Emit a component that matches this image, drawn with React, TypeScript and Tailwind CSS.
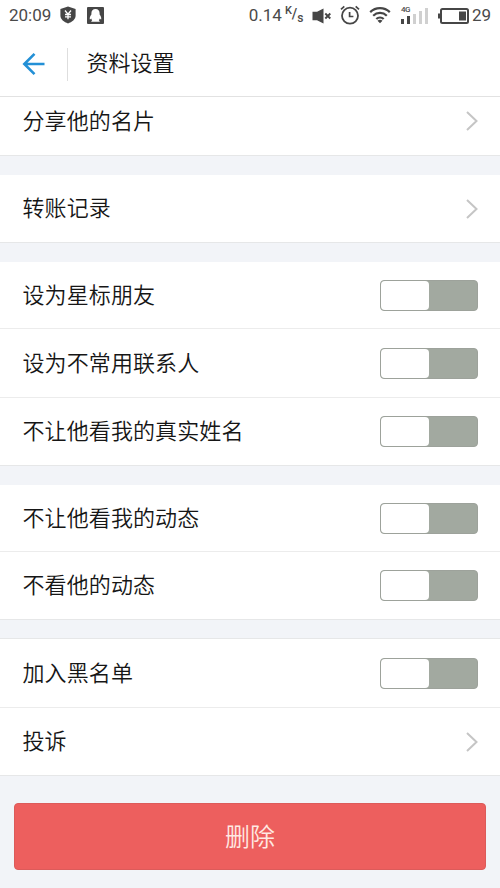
import { useState } from "react";
import clsx from "clsx";

interface SettingItem {
  label: string;
  type: "link" | "switch";
  className: string;
}

const groups: SettingItem[][] = [
  [{ label: "分享他的名片", type: "link", className: "h-[59px] pb-[10px]" }],
  [{ label: "转账记录", type: "link", className: "h-[68px]" }],
  [
    { label: "设为星标朋友", type: "switch", className: "h-[67px]" },
    { label: "设为不常用联系人", type: "switch", className: "h-[69px]" },
    { label: "不让他看我的真实姓名", type: "switch", className: "h-[68px]" },
  ],
  [
    { label: "不让他看我的动态", type: "switch", className: "h-[67px]" },
    { label: "不看他的动态", type: "switch", className: "h-[68px]" },
  ],
  [
    { label: "加入黑名单", type: "switch", className: "h-[69px]" },
    { label: "投诉", type: "link", className: "h-[68px]" },
  ],
];

function StatusBar() {
  return (
    <div className="flex h-8 items-center px-[9px] text-[#4a4a4a]">
      <span className="w-[51px] pb-px font-[Roboto] text-[17px] leading-[31px]">20:09</span>
      <svg width="16" height="18" viewBox="0 0 16 18" className="mb-[2px] shrink-0">
        <path d="M8 0.5 15.6 3v6.5c0 4-3.6 6.4-7.6 8-4-1.6-7.6-4-7.6-8V3z" fill="#464646" />
        <path d="m5 4.5 3 3.7 3-3.7M8 8v5.3M5 8.5h6M5 10.8h6" fill="none" stroke="#fff" strokeWidth="1.3" />
      </svg>
      <svg width="17" height="17" viewBox="0 0 17 17" className="mb-[2px] ml-[11px] shrink-0">
        <rect width="17" height="17" rx="1" fill="#464646" />
        <path
          d="M8.5 2c2.7 0 4.1 1.8 4.1 4.2v1.3c1 1.3 2 3.2 1.6 4.7-.3.5-1-.1-1.4-.6-.2.8-.6 1.4-1 1.8.8.4 1.1.7.8 1.3H4.4c-.3-.6 0-.9.8-1.3-.4-.4-.8-1-1-1.8-.4.5-1.1 1.1-1.4.6-.4-1.5.6-3.4 1.6-4.7V6.2C4.4 3.800 5.8 2 8.5 2z"
          fill="#fff"
        />
      </svg>

      <div className="ml-auto flex items-center">
        <span className="pb-px font-[Roboto] text-[17px] leading-[31px]">0.14</span>
        <span className="ml-[3px] mr-[9px] flex w-[18px] font-[Roboto] text-[11px] font-medium leading-4">
          <span className="-mt-1">K</span>
          <span className="-mt-px text-[14px]">/</span>
          <span className="mt-[3px] text-[12px]">s</span>
        </span>
        <svg width="20" height="16" viewBox="0 0 20 16" className="mb-px">
          <path d="M0.5 3.8h4.5L11.500 0.500v15L5 12.200H0.5z" fill="#464646" />
          <path d="m13.300 5.500 5 5m0-5-5 5" stroke="#464646" strokeWidth="1.9" />
        </svg>
        <svg width="20" height="20" viewBox="0 0 20 20" className="mb-[2px] ml-[8px]" fill="none" stroke="#464646">
          <circle cx="10" cy="10.7" r="8" strokeWidth="1.8" />
          <path d="M9.6 7v4.5h3.8" strokeWidth="1.7" />
          <path d="m1 4.300 3.300-3M19 4.300l-3.300-3" strokeWidth="1.7" />
        </svg>
        <svg width="22" height="18" viewBox="0 0 22 18" className="mb-[2px] ml-[9px]" fill="none" stroke="#464646" strokeWidth="2.2">
          <path d="M1.2 6.1c5.400-5.300 14.200-5.300 19.600 0M4.2 9.7c3.8-3.7 9.800-3.7 13.600 0M7.3 13c2.100-2 5.300-2 7.400 0" />
          <path d="m8.500 14.7 2.500 2.600 2.500-2.600c-1.400-1.300-3.600-1.300-5 0z" fill="#464646" stroke="none" />
        </svg>
        <div className="mb-[3px] ml-[10px] h-[18px] w-[27px]">
          <div className="h-2 font-[Roboto] text-[8px] font-medium leading-2 tracking-tighter">4G</div>
          <div className="-mt-2 flex h-[18px] items-end gap-[3px]">
            <i className="h-[5px] w-[3px] bg-[#464646]" />
            <i className="h-[8px] w-[3px] bg-[#464646]" />
            <i className="h-[10px] w-[3px] bg-[#d0d0d0]" />
            <i className="h-[13px] w-[3px] bg-[#d0d0d0]" />
            <i className="h-[16px] w-[3px] bg-[#d0d0d0]" />
          </div>
        </div>
        <svg width="32" height="16" viewBox="0 0 32 16" className="mb-px ml-[10px]">
          <rect x="3" y="1" width="27" height="14" rx="1.5" fill="none" stroke="#464646" strokeWidth="2" />
          <path d="M0 5.500h3v5H0zM21 3.500h7v9h-7z" fill="#464646" />
        </svg>
        <span className="ml-[2px] pb-px font-[Roboto] text-[17px] leading-[31px]">29</span>
      </div>
    </div>
  );
}

function Header() {
  return (
    <header className="flex h-[65px] items-center border-b border-[#e2e2e2] pl-[22px]">
      <button aria-label="返回">
        <svg width="24" height="24" viewBox="0 0 24 24" fill="none" stroke="#2390d6" strokeWidth="2.6">
          <path d="M12.500 1.800 2.300 12l10.200 10.200M2.500 12h20" />
        </svg>
      </button>
      <div className="ml-[21px] h-[33px] w-px bg-[#dedede]" />
      <h1 className="ml-[18.5px] pb-[7px] text-[22px] font-[350] leading-8">资料设置</h1>
    </header>
  );
}

function Toggle() {
  const [on, setOn] = useState(false);

  return (
    <button
      role="switch"
      aria-checked={on}
      onClick={() => setOn(!on)}
      className={clsx(
        "flex h-[31px] w-[98px] rounded-[4px] border border-[#9da29b]",
        on ? "justify-end bg-[#2390d6]" : "bg-[#a2a9a0]"
      )}
    >
      <span className="h-full w-[48px] rounded-[4px] bg-white" />
    </button>
  );
}

function Row({ item, last }: { item: SettingItem; last: boolean }) {
  return (
    <div
      className={clsx(
        "flex items-center justify-between border-b bg-white px-[22px]",
        last ? "border-[#e6e7e8]" : "border-[#ececec]",
        item.className
      )}
    >
      <span className="pb-[5px] pl-[0.5px] text-[22px] font-[350] leading-8 tracking-[0.1px]">{item.label}</span>
      {item.type === "switch" ? (
        <Toggle />
      ) : (
        <svg width="13" height="20" viewBox="0 0 13 20" fill="none" stroke="#c5c5c5" strokeWidth="2">
          <path d="m2 1 9.500 9L2 19" />
        </svg>
      )}
    </div>
  );
}

export default function App() {
  return (
    <div className="h-[888px] w-[500px] overflow-hidden bg-[#f2f4f8] font-['Noto_Sans_CJK_SC',sans-serif] text-[#161616]">
      <div className="bg-white">
        <StatusBar />
        <Header />
      </div>
      <main className="flex flex-col gap-[19px]">
        {groups.map((items, i) => (
          <section key={i} className={clsx(i === groups.length - 1 && "-mt-px border-t border-[#e6e7e8]")}>
            {items.map((item, j) => (
              <Row key={item.label} item={item} last={j === items.length - 1} />
            ))}
          </section>
        ))}
      </main>
      <div className="px-[14px] pt-[27px]">
        <button className="h-[67px] w-full rounded-[4px] border border-[#dc5b5a] bg-[#ed5f5e] pb-px text-[25px] font-[350] text-[#ffe9e3]">
          删除
        </button>
      </div>
    </div>
  );
}
